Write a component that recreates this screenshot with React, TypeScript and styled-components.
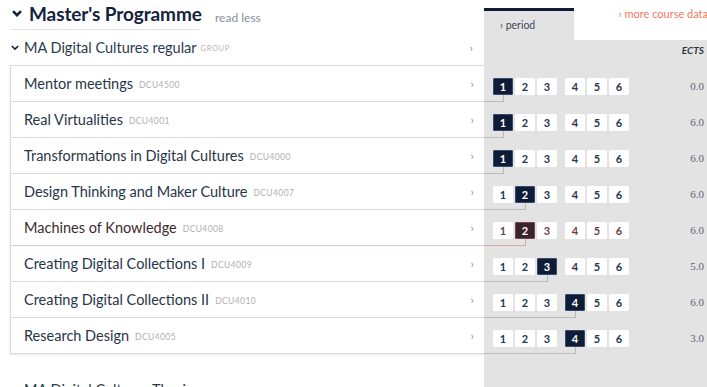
import React from "react";
import styled, { createGlobalStyle } from "styled-components";

const GlobalStyle = createGlobalStyle`
  html, body { margin: 0; padding: 0; background: #ffffff; }
  body { font-family: Lato, "Open Sans", sans-serif; }
`;

type Course = { title: string; code: string; period: number; ects: string; hover?: boolean };

const courses: Course[] = [
  { title: "Mentor meetings", code: "DCU4500", period: 1, ects: "0.0" },
  { title: "Real Virtualities", code: "DCU4001", period: 1, ects: "6.0" },
  { title: "Transformations in Digital Cultures", code: "DCU4000", period: 1, ects: "6.0" },
  { title: "Design Thinking and Maker Culture", code: "DCU4007", period: 2, ects: "6.0" },
  { title: "Machines of Knowledge", code: "DCU4008", period: 2, ects: "6.0", hover: true },
  { title: "Creating Digital Collections I", code: "DCU4009", period: 3, ects: "5.0" },
  { title: "Creating Digital Collections II", code: "DCU4010", period: 4, ects: "6.0" },
  { title: "Research Design", code: "DCU4005", period: 4, ects: "3.0" },
];

const BOX_W = 20;
const BOX_GAP = 2;
const MID_GAP = 8;
const BOX_START = 9;

const boxCenter = (p: number) =>
  BOX_START + (p - 1) * (BOX_W + BOX_GAP) + (p > 3 ? MID_GAP - BOX_GAP : 0) + BOX_W / 2;

const Page = styled.div`
  display: grid;
  grid-template-columns: 484px 1fr;
  height: 100vh;
  overflow: hidden;
`;

const LeftCol = styled.div`
  display: flex;
  flex-direction: column;
`;

const Header = styled.div`
  display: flex;
  align-items: flex-end;
  height: 30px;
`;

const TitleWrap = styled.div`
  display: flex;
  align-items: center;
  gap: 7px;
  margin-left: 10px;
  padding-left: 2px;
  width: 190px;
  height: 29px;
  box-sizing: border-box;
  padding-bottom: 3px;
  border-bottom: 1px solid #e2e2e2;
`;

const Title = styled.h1`
  margin: 0;
  font-size: 19px;
  line-height: 22px;
  font-weight: 700;
  color: #15223d;
  letter-spacing: -0.1px;
  white-space: nowrap;
`;

const ReadLess = styled.span`
  margin-left: 15px;
  margin-bottom: 5px;
  font-size: 12px;
  line-height: 14px;
  color: #8a8f98;
`;

const GroupRow = styled.div`
  display: flex;
  align-items: center;
  height: 35px;
  padding-left: 11px;
  padding-right: 11px;
`;

const GroupName = styled.span`
  margin-left: 5px;
  font-size: 14.5px;
  color: #2c3a4d;
`;

const Tag = styled.span`
  margin-left: 4px;
  font-size: 7.5px;
  letter-spacing: 0.6px;
  text-transform: uppercase;
  color: #b3b3b3;
  position: relative;
  top: 1px;
`;

const Arrow = styled.span`
  margin-left: auto;
  font-size: 12px;
  color: #8a93a0;
`;

const Card = styled.div`
  margin-left: 10px;
  border-top: 1px solid #dcdcdc;
  border-left: 1px solid #dcdcdc;
  box-shadow: 0 1px 2px rgba(0, 0, 0, 0.1);
  background: #ffffff;
`;

const CourseRow = styled.div<{ $hover?: boolean }>`
  display: flex;
  align-items: center;
  height: 36px;
  box-sizing: border-box;
  padding-left: 13px;
  padding-right: 10px;
  border-bottom: 1px solid ${(p) => (p.$hover ? "#e6c6c6" : "#dcdcdc")};
`;

const CourseTitle = styled.span<{ $hover?: boolean }>`
  font-size: 14.5px;
  color: ${(p) => (p.$hover ? "#3e2a2e" : "#283548")};
`;

const Code = styled(Tag)`
  margin-left: 6px;
  font-size: 8.5px;
  letter-spacing: 0.4px;
  color: #b0b0b0;
`;

const NextGroup = styled.div`
  margin-top: 27px;
  margin-left: 24px;
  font-size: 14.5px;
  color: #2c3a4d;
`;

const RightCol = styled.div`
  display: flex;
  flex-direction: column;
`;

const TabBar = styled.div`
  display: flex;
  margin-top: 8px;
  height: 32px;
`;

const PeriodTab = styled.div`
  width: 90px;
  box-sizing: border-box;
  background: #e3e3e3;
  border-top: 3px solid #0e1a36;
  padding: 8px 0 0 16px;
  font-size: 10.5px;
  color: #3d4759;
`;

const MoreLink = styled.div`
  flex: 1;
  text-align: right;
  white-space: nowrap;
  font-size: 11px;
  line-height: 12px;
  color: #f2785f;
  margin-right: -1px;
`;

const GrayBody = styled.div`
  flex: 1;
  background: #e3e3e3;
`;

const EctsHead = styled.div`
  height: 26px;
  box-sizing: border-box;
  padding: 4px 3px 0 0;
  text-align: right;
  font-size: 10px;
  font-weight: 700;
  font-style: italic;
  color: #2c3443;
`;

const PeriodRow = styled.div`
  position: relative;
  display: flex;
  align-items: flex-start;
  height: 36px;
  box-sizing: border-box;
  padding: 12px 3px 0 ${BOX_START}px;
`;

const Boxes = styled.div`
  display: flex;
  gap: ${BOX_GAP}px;
`;

const Box = styled.div<{ $active?: boolean; $hover?: boolean; $split?: boolean }>`
  width: ${BOX_W}px;
  height: 17px;
  box-sizing: border-box;
  display: flex;
  align-items: center;
  justify-content: center;
  margin-left: ${(p) => (p.$split ? MID_GAP - BOX_GAP : 0)}px;
  font-size: 11px;
  font-weight: 700;
  border-radius: 1px;
  background: ${(p) => (p.$active ? (p.$hover ? "#3c2229" : "#0f1c38") : "#ffffff")};
  color: ${(p) => (p.$active ? "#ffffff" : p.$hover ? "#6e3f3f" : "#2a3650")};
  border: 1px solid ${(p) => (p.$active ? (p.$hover ? "#6d4a52" : "#3a4a6a") : "#ffffff")};
`;

const Ects = styled.span`
  margin-left: auto;
  margin-top: 2px;
  font-family: "Liberation Serif", serif;
  font-size: 11px;
  color: #5f6673;
`;

const Connector = styled.span<{ $hover?: boolean }>`
  position: absolute;
  left: 0;
  top: 29px;
  height: 7px;
  box-sizing: border-box;
  border-right: 1px solid ${(p) => (p.$hover ? "#d6a9a9" : "#b9b9b9")};
  border-bottom: 1px solid ${(p) => (p.$hover ? "#d6a9a9" : "#b9b9b9")};
`;

const ChevronDown = ({ size = 10, stroke = 2.6 }: { size?: number; stroke?: number }) => (
  <svg width={size} height={size * 0.7} viewBox="0 0 10 7" style={{ flexShrink: 0 }}>
    <polyline points="1,1.2 5,5.2 9,1.2" fill="none" stroke="#15223d" strokeWidth={stroke} />
  </svg>
);

export default function App() {
  return (
    <>
      <GlobalStyle />
      <Page>
        <LeftCol>
          <Header>
            <TitleWrap>
              <ChevronDown />
              <Title>Master's Programme</Title>
            </TitleWrap>
            <ReadLess>read less</ReadLess>
          </Header>
          <GroupRow>
            <ChevronDown size={8} stroke={2} />
            <GroupName>MA Digital Cultures regular</GroupName>
            <Tag>group</Tag>
            <Arrow>›</Arrow>
          </GroupRow>
          <Card>
            {courses.map((c) => (
              <CourseRow key={c.code} $hover={c.hover}>
                <CourseTitle $hover={c.hover}>{c.title}</CourseTitle>
                <Code>{c.code}</Code>
                <Arrow>›</Arrow>
              </CourseRow>
            ))}
          </Card>
          <NextGroup>MA Digital Cultures Thesis</NextGroup>
        </LeftCol>
        <RightCol>
          <TabBar>
            <PeriodTab>› period</PeriodTab>
            <MoreLink>› more course data</MoreLink>
          </TabBar>
          <GrayBody>
            <EctsHead>ECTS</EctsHead>
            {courses.map((c) => (
              <PeriodRow key={c.code}>
                <Connector $hover={c.hover} style={{ width: boxCenter(c.period) + 1 }} />
                <Boxes>
                  {[1, 2, 3, 4, 5, 6].map((n) => (
                    <Box key={n} $active={n === c.period} $hover={c.hover} $split={n === 4}>
                      {n}
                    </Box>
                  ))}
                </Boxes>
                <Ects>{c.ects}</Ects>
              </PeriodRow>
            ))}
          </GrayBody>
        </RightCol>
      </Page>
    </>
  );
}
